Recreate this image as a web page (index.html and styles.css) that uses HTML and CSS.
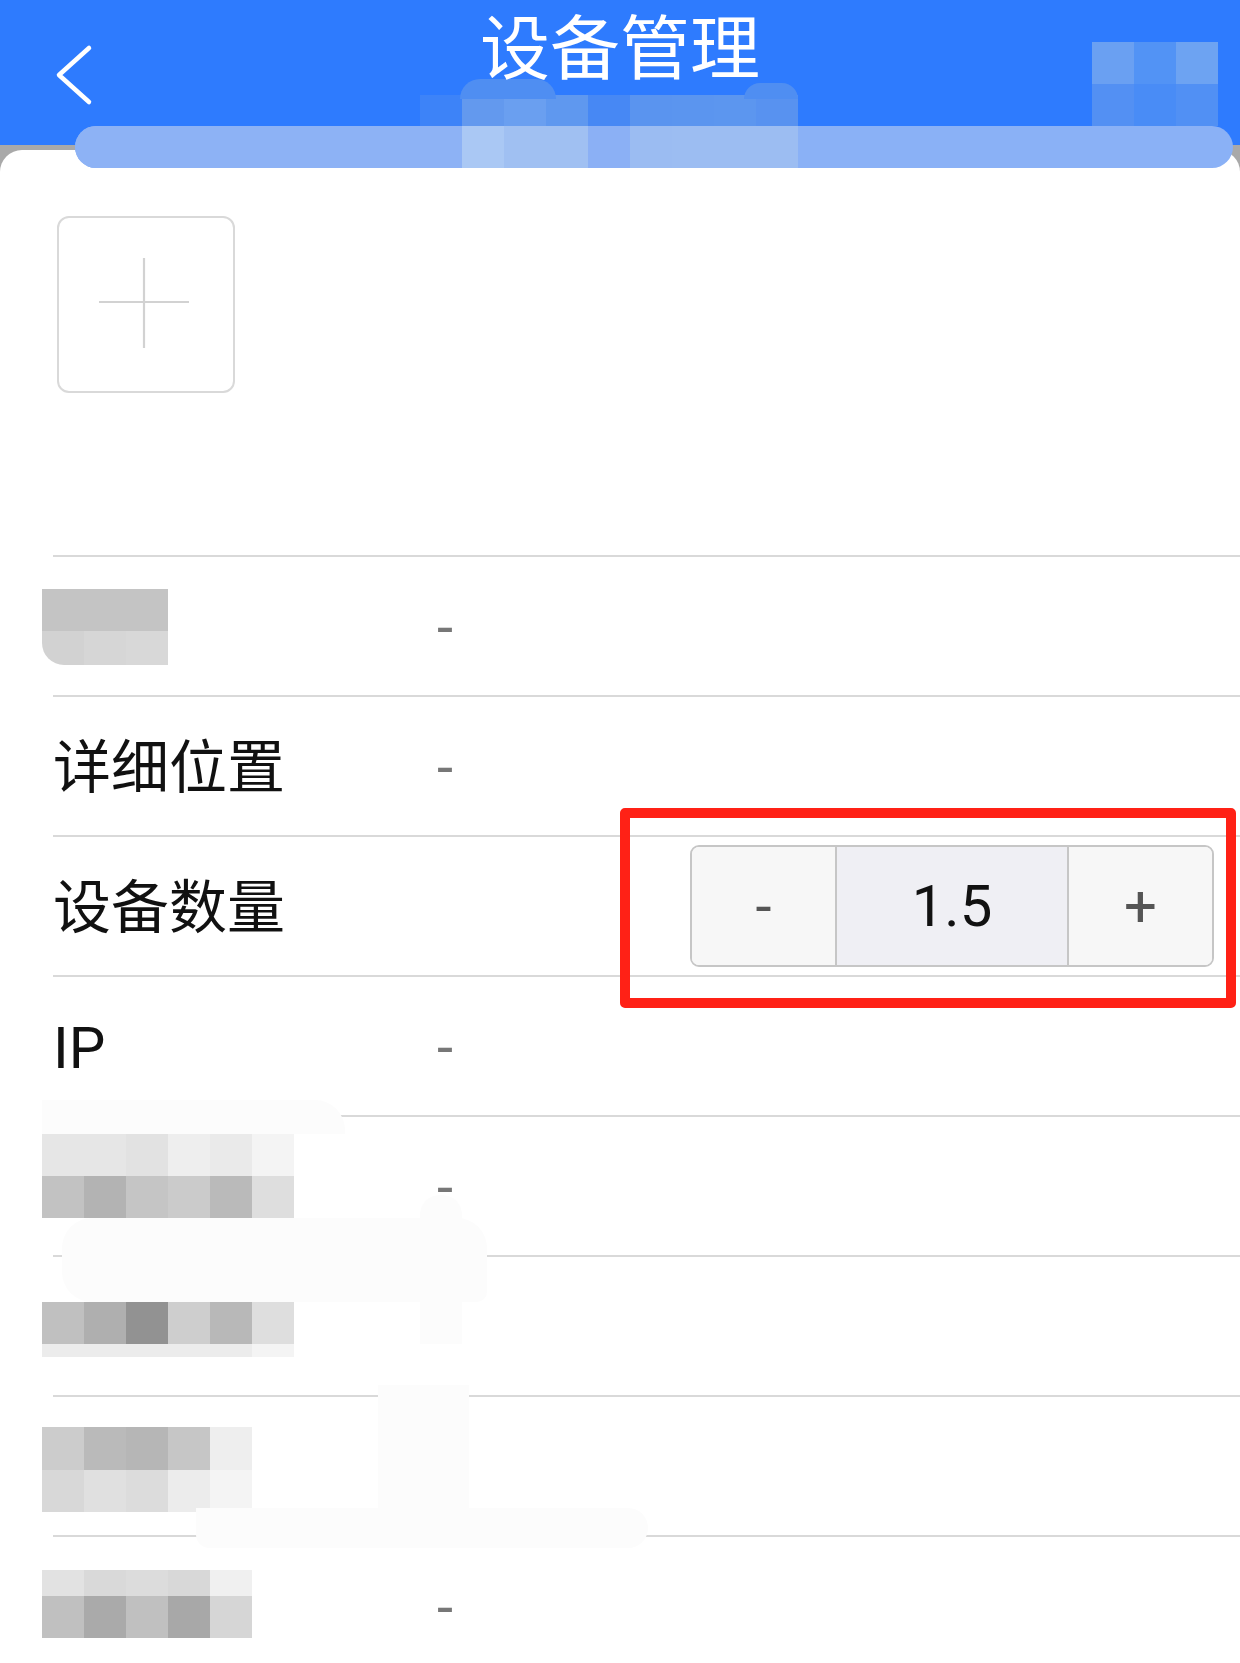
FILE: index.html
```html
<!DOCTYPE html>
<html lang="zh-CN">
<head>
<meta charset="utf-8">
<title>设备管理</title>
<link rel="stylesheet" href="styles.css">
</head>
<body>
<div class="screen">
  <header class="topbar">
    <div class="back">
      <svg width="44" height="64" viewBox="0 0 44 64"><polyline points="34,4 4,31 34,58" fill="none" stroke="#fff" stroke-width="4.5" stroke-linecap="round" stroke-linejoin="round"/></svg>
    </div>
    <h1 class="title">设备管理</h1>
    <div class="spacer"></div>
    <div class="blur-mid">
      <span class="hb hb1"></span><span class="hb hb2"></span>
      <span class="bc b-3d"></span><span class="bc b-63"></span><span class="bc b-6a"></span><span class="bc b-5f"></span><span class="bc b-47"></span><span class="bc b-5a"></span><span class="bc b-5b"></span><span class="bc b-5c"></span><span class="bc b-58"></span>
    </div>
    <div class="blur-right">
      <span class="bc r-6a"></span><span class="bc r-52"></span><span class="bc r-6d"></span>
      <span class="bc r-53"></span><span class="bc r-49"></span><span class="bc r-51"></span>
    </div>
  </header>

  <div class="blur-band">
    <span class="bd bd-0"></span><span class="bd bd-1"></span><span class="bd bd-2"></span><span class="bd bd-3"></span><span class="bd bd-3"></span><span class="bd bd-4"></span><span class="bd bd-5"></span><span class="bd bd-6"></span><span class="bd bd-6"></span><span class="bd bd-6"></span>
  </div>

  <main class="sheet">
    <div class="card">
      <section class="upload">
        <div class="upload-box">
          <svg width="92" height="92" viewBox="0 0 92 92"><path d="M46 1V91M1 45H91" stroke="#d2d2d2" stroke-width="2.2" fill="none"/></svg>
        </div>
      </section>

      <div class="list">
        <div class="row">
          <div class="label">
            <div class="mosaic mz-1">
              <span class="g-c4"></span><span class="g-c4"></span><span class="g-c4"></span>
              <span class="g-d2"></span><span class="g-d6"></span><span class="g-d8"></span>
            </div>
          </div>
          <div class="value">-</div>
        </div>

        <div class="row">
          <div class="label">详细位置</div>
          <div class="value">-</div>
        </div>

        <div class="row">
          <div class="label">设备数量</div>
          <div class="stepper">
            <div class="step-btn">-</div>
            <div class="step-val">1.5</div>
            <div class="step-btn">+</div>
          </div>
        </div>

        <div class="row">
          <div class="label">IP</div>
          <div class="value">-</div>
        </div>

        <div class="row row-top">
          <div class="label">
            <div class="mosaic mz-5">
              <span class="g-e6"></span><span class="g-e6"></span><span class="g-e2"></span><span class="g-ee"></span><span class="g-ea"></span><span class="g-f4"></span>
              <span class="g-c2"></span><span class="g-b3"></span><span class="g-c5"></span><span class="g-cb"></span><span class="g-ba"></span><span class="g-de"></span>
            </div>
          </div>
          <div class="value">-</div>
        </div>

        <div class="row row-top">
          <div class="label">
            <div class="mosaic mz-6">
              <span class="g-c0"></span><span class="g-af"></span><span class="g-92"></span><span class="g-ce"></span><span class="g-b8"></span><span class="g-de"></span>
              <span class="g-ec"></span><span class="g-ec"></span><span class="g-ec"></span><span class="g-ec"></span><span class="g-ec"></span><span class="g-f4"></span>
            </div>
          </div>
          <div class="value">-</div>
        </div>

        <div class="row row-top">
          <div class="label">
            <div class="mosaic mz-7">
              <span class="g-cc"></span><span class="g-ba"></span><span class="g-b6"></span><span class="g-c6"></span><span class="g-ee"></span>
              <span class="g-d8"></span><span class="g-e0"></span><span class="g-dc"></span><span class="g-ec"></span><span class="g-f4"></span>
            </div>
          </div>
          <div class="value">-</div>
        </div>

        <div class="row row-top">
          <div class="label">
            <div class="mosaic mz-8">
              <span class="g-e2"></span><span class="g-d9"></span><span class="g-dc"></span><span class="g-d8"></span><span class="g-f0"></span>
              <span class="g-c0"></span><span class="g-aa"></span><span class="g-c0"></span><span class="g-a8"></span><span class="g-d6"></span>
            </div>
          </div>
          <div class="value">-</div>
        </div>
      </div>
    </div>
  </main>

  <div class="highlight"></div>
  <div class="smudge sm-1"></div>
  <div class="smudge sm-2"></div>
  <div class="smudge sm-3"></div>
  <div class="smudge sm-4"></div>
  <div class="smudge sm-5"></div>
</div>
</body>
</html>
```

FILE: styles.css
```css
html, body {
  margin: 0;
  padding: 0;
  width: 1240px;
  height: 1663px;
  overflow: hidden;
  background: #ffffff;
}

.screen {
  position: relative;
  width: 1240px;
  height: 1663px;
  overflow: hidden;
  font-family: Roboto, "Noto Sans CJK SC", sans-serif;
  color: #111;
}

/* ---------- top bar ---------- */
.topbar {
  position: relative;
  height: 145px;
  background: #2e7bfe;
  display: grid;
  grid-template-columns: 1fr auto 1fr;
  align-items: start;
}

.back {
  padding: 44px 0 0 55px;
}
.back svg { display: block; }

.title {
  margin: 0;
  padding-top: 4px;
  font-family: "Noto Sans CJK SC", sans-serif;
  font-weight: 400;
  font-size: 70px;
  line-height: 80px;
  color: #fff;
  letter-spacing: 0;
  position: relative;
  z-index: 1;
}

.blur-mid {
  position: absolute;
  left: 420px;
  top: 95px;
  width: 378px;
  height: 31px;
  display: grid;
  grid-template-columns: repeat(9, 42px);
}
.blur-mid .hb {
  position: absolute;
  background: #4f8ef2;
}
.blur-mid .hb1 { left: 40px; top: -16px; width: 96px; height: 20px; border-radius: 50px 50px 0 0; }
.blur-mid .hb2 { left: 324px; top: -12px; width: 54px; height: 16px; border-radius: 30px 30px 0 0; }
.bc { display: block; }
.b-3d { background: #3d83f8; }
.b-63 { background: #6399ee; }
.b-6a { background: #6a9ff0; }
.b-5f { background: #5f98ef; }
.b-47 { background: #4788f4; }
.b-5a { background: #5a94ef; }
.b-5b { background: #5b95ef; }
.b-5c { background: #5c96ef; }
.b-58 { background: #5892f0; }

.blur-right {
  position: absolute;
  left: 1092px;
  top: 42px;
  width: 126px;
  height: 84px;
  display: grid;
  grid-template-columns: repeat(3, 42px);
  grid-template-rows: repeat(2, 42px);
}
.r-6a { background: #6aa0f2; }
.r-52 { background: #5293f5; }
.r-6d { background: #6da3f2; }
.r-53 { background: #5390f3; }
.r-49 { background: #498cf6; }
.r-51 { background: #5190f4; }

.blur-band {
  position: absolute;
  left: 75px;
  top: 126px;
  width: 1158px;
  height: 42px;
  border-radius: 21px;
  overflow: hidden;
  background: #8ab1f6;
  display: flex;
  z-index: 3;
}
.bd { display: block; height: 42px; }
.bd-0 { width: 345px; background: #8db2f5; }
.bd-1 { width: 42px; background: #8db2f5; }
.bd-2 { width: 42px; background: #aac8f4; }
.bd-3 { width: 42px; background: #a0c0f2; }
.bd-4 { width: 42px; background: #8bb0f5; }
.bd-5 { width: 42px; background: #9bbcf2; }
.bd-6 { width: 42px; background: #9cbdf2; }

/* ---------- sheet ---------- */
.sheet {
  background: #a9a9a9;
  padding-top: 5px;
}

.card {
  background: #fff;
  border-radius: 22px 22px 0 0;
  height: 1600px;
}

.upload {
  padding: 66px 0 0 57px;
}
.upload-box {
  width: 178px;
  height: 177px;
  box-sizing: border-box;
  border: 2px solid #d9d9d9;
  border-radius: 12px;
  display: flex;
  align-items: center;
  justify-content: center;
}
.upload-box svg { display: block; margin: -4px 0 0 -4px; }

.list {
  margin-top: 162px;
  margin-left: 53px;
}

.row {
  height: 140px;
  box-sizing: border-box;
  border-top: 2px solid #d9d9d9;
  display: flex;
  align-items: center;
}
.row-top { align-items: flex-start; }
.row-top .value { align-self: center; }

.label {
  width: 384px;
  padding-top: 4px;
  font-size: 58px;
  line-height: 70px;
  color: #111;
  white-space: nowrap;
}

.value {
  font-size: 58px;
  line-height: 70px;
  color: #777;
  padding-top: 1px;
}

/* ---------- mosaic (pixelated labels) ---------- */
.mosaic {
  display: grid;
  margin-left: -11px;
}
.mosaic span { display: block; }
.mz-1 {
  grid-template-columns: repeat(3, 42px);
  grid-template-rows: 42px 34px;
  border-bottom-left-radius: 22px;
  overflow: hidden;
  margin-top: -3px;
}
.mz-5 { grid-template-columns: repeat(6, 42px); grid-template-rows: 42px 42px; margin-top: 13px; }
.mz-6 { grid-template-columns: repeat(6, 42px); grid-template-rows: 42px 13px; margin-top: 41px; }
.mz-7 { grid-template-columns: repeat(5, 42px); grid-template-rows: 43px 42px; margin-top: 26px; }
.mz-8 { grid-template-columns: repeat(5, 42px); grid-template-rows: 26px 42px; margin-top: 29px; }

.g-92 { background: #929292; }
.g-a8 { background: #a8a8a8; }
.g-aa { background: #aaaaaa; }
.g-af { background: #afafaf; }
.g-b3 { background: #b3b3b3; }
.g-b6 { background: #b6b6b6; }
.g-b8 { background: #b8b8b8; }
.g-ba { background: #bababa; }
.g-c0 { background: #c0c0c0; }
.g-c2 { background: #c2c2c2; }
.g-c4 { background: #c4c4c4; }
.g-c5 { background: #c5c5c5; }
.g-c6 { background: #c6c6c6; }
.g-cb { background: #cbcbcb; }
.g-cc { background: #cccccc; }
.g-ce { background: #cecece; }
.g-d2 { background: #d2d2d2; }
.g-d6 { background: #d6d6d6; }
.g-d8 { background: #d8d8d8; }
.g-d9 { background: #d9d9d9; }
.g-dc { background: #dcdcdc; }
.g-de { background: #dedede; }
.g-e0 { background: #e0e0e0; }
.g-e2 { background: #e2e2e2; }
.g-e6 { background: #e6e6e6; }
.g-ea { background: #eaeaea; }
.g-ec { background: #ececec; }
.g-ee { background: #eeeeee; }
.g-f0 { background: #f0f0f0; }
.g-f4 { background: #f4f4f4; }

/* ---------- stepper ---------- */
.stepper {
  margin-left: auto;
  margin-right: 26px;
  width: 524px;
  height: 122px;
  box-sizing: border-box;
  border: 2px solid #c6c6c6;
  border-radius: 9px;
  overflow: hidden;
  display: flex;
}
.step-btn {
  width: 143px;
  background: #f7f7f7;
  display: flex;
  align-items: center;
  justify-content: center;
  font-size: 58px;
  color: #555;
}
.step-val {
  flex: 1;
  background: #efeff4;
  border-left: 2px solid #c6c6c6;
  border-right: 2px solid #c6c6c6;
  display: flex;
  align-items: center;
  justify-content: center;
  font-size: 58px;
  color: #111;
}

/* ---------- overlays ---------- */
.highlight {
  position: absolute;
  left: 620px;
  top: 808px;
  width: 616px;
  height: 200px;
  box-sizing: border-box;
  border: 10px solid #ff2116;
  border-radius: 5px;
  z-index: 4;
}

.smudge {
  position: absolute;
  background: #fcfcfc;
  z-index: 2;
}
.sm-1 { left: 42px; top: 1100px; width: 303px; height: 34px; border-radius: 0 30px 0 0; }
.sm-2 { left: 62px; top: 1218px; width: 425px; height: 84px; border-radius: 30px 30px 10px 30px; }
.sm-3 { left: 420px; top: 1195px; width: 42px; height: 149px; border-radius: 20px 20px 0 0; }
.sm-4 { left: 378px; top: 1385px; width: 91px; height: 126px; }
.sm-5 { left: 196px; top: 1508px; width: 452px; height: 40px; border-radius: 0 30px 30px 20px; }
```
